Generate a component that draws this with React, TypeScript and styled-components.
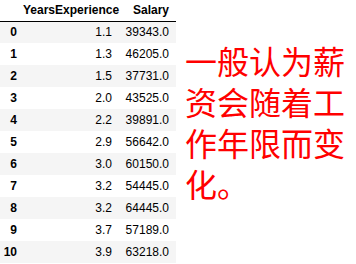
import styled, { createGlobalStyle } from "styled-components";

const GlobalStyle = createGlobalStyle`
  html, body {
    margin: 0;
    padding: 0;
    background: #ffffff;
  }
`;

const rows: [string, string, string][] = [
  ["0", "1.1", "39343.0"],
  ["1", "1.3", "46205.0"],
  ["2", "1.5", "37731.0"],
  ["3", "2.0", "43525.0"],
  ["4", "2.2", "39891.0"],
  ["5", "2.9", "56642.0"],
  ["6", "3.0", "60150.0"],
  ["7", "3.2", "54445.0"],
  ["8", "3.2", "64445.0"],
  ["9", "3.7", "57189.0"],
  ["10", "3.9", "63218.0"],
];

const App = () => (
  <>
    <GlobalStyle />
    <Page>
      <DataFrame>
        <colgroup>
          <col style={{ width: 23 }} />
          <col style={{ width: 96 }} />
          <col style={{ width: 57 }} />
        </colgroup>
        <thead>
          <HeadRow>
            <HeadCell />
            <HeadCell>YearsExperience</HeadCell>
            <HeadCell>Salary</HeadCell>
          </HeadRow>
        </thead>
        <tbody>
          {rows.map(([idx, years, salary]) => (
            <BodyRow key={idx}>
              <IndexCell>{idx}</IndexCell>
              <Cell>{years}</Cell>
              <Cell>{salary}</Cell>
            </BodyRow>
          ))}
        </tbody>
      </DataFrame>
      <Note>一般认为薪资会随着工作年限而变化。</Note>
    </Page>
  </>
);

export default App;

const Page = styled.div`
  display: flex;
  align-items: flex-start;
  width: 356px;
  height: 264px;
  overflow: hidden;
`;

const DataFrame = styled.table`
  width: 176px;
  flex: none;
  table-layout: fixed;
  border-collapse: collapse;
  border-spacing: 0;
  font-family: "Liberation Sans", Arial, sans-serif;
  font-size: 12px;
  color: #000;
`;

const HeadRow = styled.tr`
  height: 21px;
  border-bottom: 1px solid #000;
`;

const HeadCell = styled.th`
  padding: 0 7px 1px 0;
  text-align: right;
  font-weight: bold;
  white-space: nowrap;
  vertical-align: middle;
`;

const BodyRow = styled.tr`
  height: 22px;

  &:nth-child(odd) {
    background: #f5f5f5;
  }
`;

const Cell = styled.td`
  padding: 0 7px 0 0;
  text-align: right;
  white-space: nowrap;
  vertical-align: middle;
`;

const IndexCell = styled(Cell)`
  padding-right: 6px;
  font-weight: bold;
`;

const Note = styled.div`
  flex: 1;
  padding: 40px 0 0 9px;
  font-family: "Noto Sans CJK SC", "Noto Sans", sans-serif;
  font-size: 32px;
  line-height: 41px;
  color: #ff0000;
`;
